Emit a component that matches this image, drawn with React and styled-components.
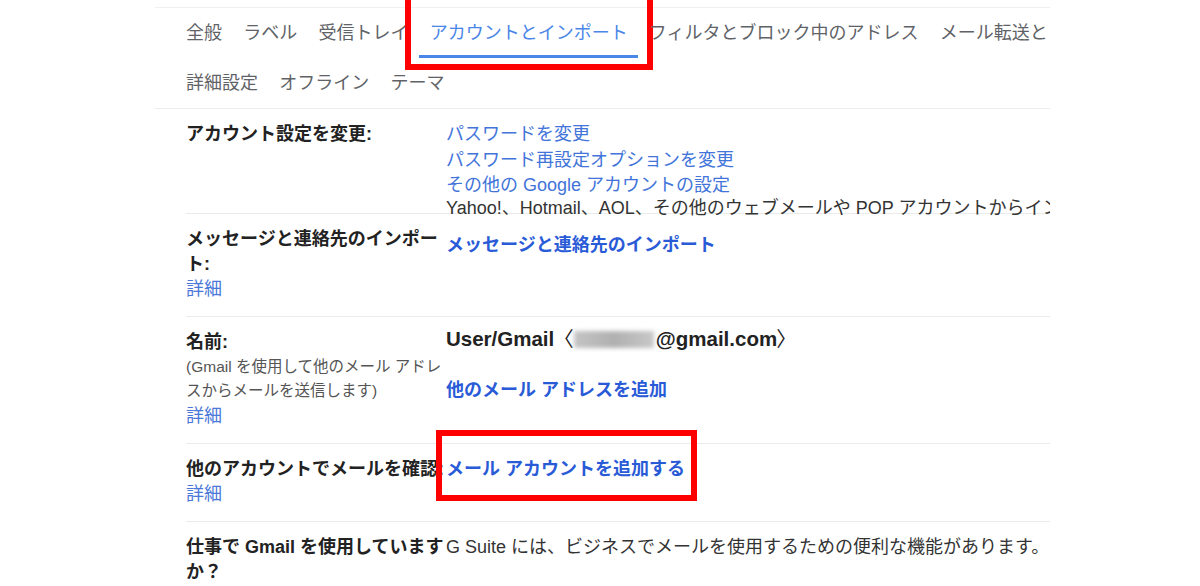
import React from 'react';
import styled, { createGlobalStyle } from 'styled-components';

const tabRows = [
  ['全般', 'ラベル', '受信トレイ', 'アカウントとインポート', 'フィルタとブロック中のアドレス', 'メール転送と POP/IMAP'],
  ['詳細設定', 'オフライン', 'テーマ'],
];

function App() {
  return (
    <Page>
      <GlobalStyle />
      <Panel>
        <TabBar>
          {tabRows.map((row, i) => (
            <TabRow key={i}>
              {row.map((name) => {
                const active = name === 'アカウントとインポート';
                return (
                  <Tab key={name} $active={active}>
                    {name}
                    {active && <Highlight $top={-18} $right={-15} $bottom={-15} $left={-14} />}
                  </Tab>
                );
              })}
            </TabRow>
          ))}
        </TabBar>

        <SettingsTable>
          <Row>
            <Label>アカウント設定を変更:</Label>
            <Value>
              <Link href="#">パスワードを変更</Link>
              <Link href="#">パスワード再設定オプションを変更</Link>
              <Link href="#">その他の Google アカウントの設定</Link>
            </Value>
          </Row>

          <Row>
            <Label>
              メッセージと連絡先のインポート:
              <Detail href="#">詳細</Detail>
            </Label>
            <Value>
              <Note>Yahoo!、Hotmail、AOL、その他のウェブメールや POP アカウントからインポートします。</Note>
              <Link href="#" $bold $gap={12}>メッセージと連絡先のインポート</Link>
            </Value>
          </Row>

          <Row>
            <Label>
              名前:
              <Description>(Gmail を使用して他のメール アドレスからメールを送信します)</Description>
              <Detail href="#">詳細</Detail>
            </Label>
            <Value>
              <UserLine>
                User/Gmail<Bracket $side="open">〈</Bracket>
                <Blurred />@gmail.com<Bracket $side="close">〉</Bracket>
              </UserLine>
              <Link href="#" $bold $gap={27}>他のメール アドレスを追加</Link>
            </Value>
          </Row>

          <Row>
            <Label>
              他のアカウントでメールを確認:
              <Detail href="#">詳細</Detail>
            </Label>
            <Value>
              <Marked>
                <Link href="#" $bold>メール アカウントを追加する</Link>
                <Highlight $top={-27} $right={-12} $bottom={-19} $left={-10} />
              </Marked>
            </Value>
          </Row>

          <Row>
            <Label>仕事で Gmail を使用していますか？</Label>
            <Value>
              <Plain>G Suite には、ビジネスでメールを使用するための便利な機能があります。</Plain>
            </Value>
          </Row>
        </SettingsTable>
      </Panel>
    </Page>
  );
}

export default App;

const GlobalStyle = createGlobalStyle`
  body {
    margin: 0;
    background: #fff;
    font-family: "Liberation Sans", "Noto Sans CJK JP", sans-serif;
  }
`;

const Page = styled.div`
  height: 586px;
  overflow: hidden;
  padding: 7px 0 0 155px;
  box-sizing: border-box;
`;

const Panel = styled.div`
  width: 895px;
  border-top: 1px solid #eef0f2;
  overflow-x: clip;
`;

const TabBar = styled.div`
  padding-left: 20.5px;
  border-bottom: 1px solid #eceff1;
`;

const TabRow = styled.div`
  display: flex;
  height: 50px;
  white-space: nowrap;
`;

const Tab = styled.div`
  position: relative;
  flex-shrink: 0;
  box-sizing: border-box;
  height: 50px;
  padding: 4px 10.6px 0;
  line-height: 43px;
  font-size: 18px;
  color: ${(p) => (p.$active ? '#4a86e8' : '#5f6368')};
  border-bottom: 3px solid ${(p) => (p.$active ? '#4a86e8' : 'transparent')};
`;

const Highlight = styled.span`
  position: absolute;
  top: ${(p) => p.$top}px;
  right: ${(p) => p.$right}px;
  bottom: ${(p) => p.$bottom}px;
  left: ${(p) => p.$left}px;
  border: 6px solid #f00;
  pointer-events: none;
`;

const SettingsTable = styled.div`
  margin-left: 31px;
`;

const Row = styled.div`
  display: grid;
  grid-template-columns: 260px 1fr;
  padding: 13px 0 14px;
  border-bottom: 1px solid #ebebeb;

  &:last-child {
    border-bottom: none;
  }
`;

const Label = styled.div`
  font-size: 18px;
  font-weight: bold;
  line-height: 25px;
  color: #222;
`;

const Detail = styled.a`
  display: block;
  font-weight: normal;
  color: #4a78d8;
  text-decoration: none;
`;

const Description = styled.div`
  font-size: 15.5px;
  font-weight: normal;
  line-height: 24.5px;
  color: #555;
`;

const Value = styled.div`
  font-size: 18px;
  line-height: 25.5px;
  color: #333;
  white-space: nowrap;
`;

const Link = styled.a`
  display: block;
  margin-top: ${(p) => p.$gap || 0}px;
  font-weight: ${(p) => (p.$bold ? 'bold' : 'normal')};
  color: ${(p) => (p.$bold ? '#2a5bd7' : '#4274da')};
  text-decoration: none;
`;

const Note = styled.div`
  margin-top: -31px;
  line-height: 25px;
`;

const Plain = styled.div`
  line-height: 25px;
`;

const UserLine = styled.div`
  margin-top: -4px;
  font-size: 20.5px;
  font-weight: bold;
  line-height: 25px;
  color: #222;
`;

const Bracket = styled.span`
  font-weight: normal;
  margin-left: ${(p) => (p.$side === 'open' ? '-1px' : '-1px')};
`;

const Blurred = styled.span`
  display: inline-block;
  width: 80px;
  height: 17px;
  margin-right: 2px;
  vertical-align: -2px;
  background: linear-gradient(90deg, #c4c4c4, #b0b0b0 50%, #c8c8c8);
  filter: blur(2px);
`;

const Marked = styled.div`
  position: relative;
  display: inline-block;
`;
